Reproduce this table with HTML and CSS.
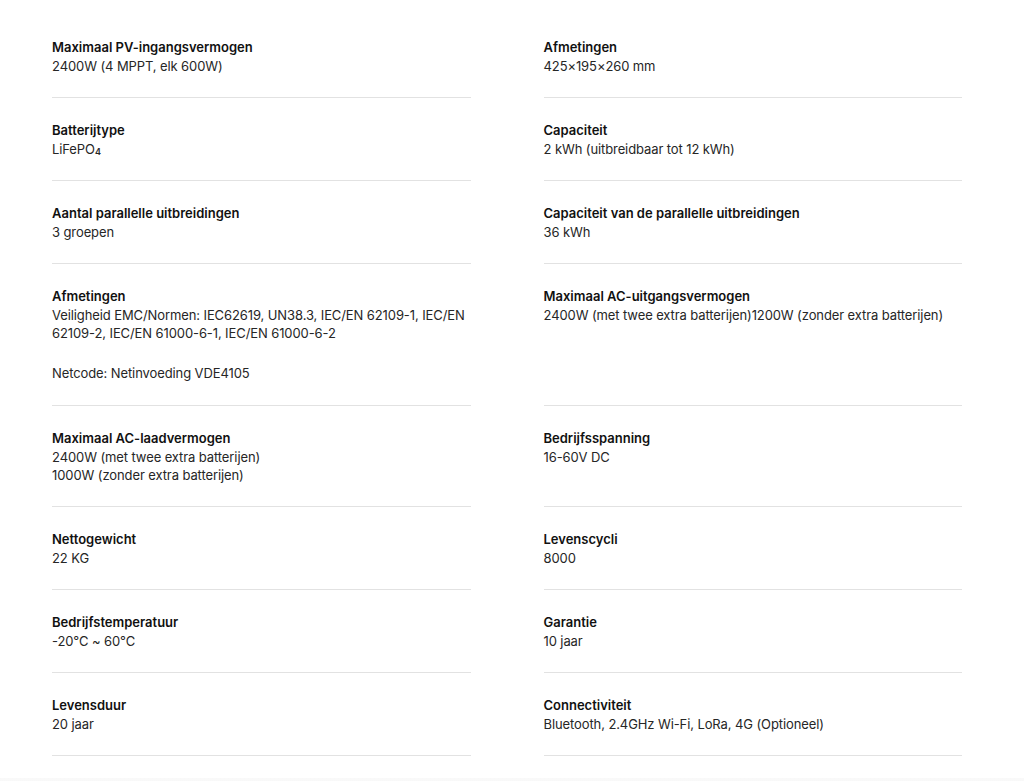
FILE: index.html
```
<!DOCTYPE html>
<html lang="nl">
<head>
<meta charset="utf-8">
<title>Specificaties</title>
<link rel="stylesheet" href="styles.css">
</head>
<body>
<main class="specs">
  <div class="spec"><div class="label">Maximaal PV-ingangsvermogen</div><div class="value">2400W (4 MPPT, elk 600W)</div></div>
  <div class="spec"><div class="label">Afmetingen</div><div class="value">425×195×260 mm</div></div>
  <div class="spec"><div class="label">Batterijtype</div><div class="value">LiFePO<sub>4</sub></div></div>
  <div class="spec"><div class="label">Capaciteit</div><div class="value">2 kWh (uitbreidbaar tot 12 kWh)</div></div>
  <div class="spec"><div class="label">Aantal parallelle uitbreidingen</div><div class="value">3 groepen</div></div>
  <div class="spec"><div class="label">Capaciteit van de parallelle uitbreidingen</div><div class="value">36 kWh</div></div>
  <div class="spec"><div class="label">Afmetingen</div><div class="value">Veiligheid EMC/Normen: IEC62619, UN38.3, IEC/EN 62109-1, IEC/EN 62109-2, IEC/EN 61000-6-1, IEC/EN 61000-6-2</div><div class="value para">Netcode: Netinvoeding VDE4105</div></div>
  <div class="spec"><div class="label">Maximaal AC-uitgangsvermogen</div><div class="value">2400W (met twee extra batterijen)1200W (zonder extra batterijen)</div></div>
  <div class="spec"><div class="label">Maximaal AC-laadvermogen</div><div class="value">2400W (met twee extra batterijen)<br>1000W (zonder extra batterijen)</div></div>
  <div class="spec"><div class="label">Bedrijfsspanning</div><div class="value">16-60V DC</div></div>
  <div class="spec"><div class="label">Nettogewicht</div><div class="value">22 KG</div></div>
  <div class="spec"><div class="label">Levenscycli</div><div class="value">8000</div></div>
  <div class="spec"><div class="label">Bedrijfstemperatuur</div><div class="value">-20°C ~ 60°C</div></div>
  <div class="spec"><div class="label">Garantie</div><div class="value">10 jaar</div></div>
  <div class="spec"><div class="label">Levensduur</div><div class="value">20 jaar</div></div>
  <div class="spec"><div class="label">Connectiviteit</div><div class="value">Bluetooth, 2.4GHz Wi-Fi, LoRa, 4G (Optioneel)</div></div>
</main>
<div class="footer-fade"></div>
</body>
</html>
```
FILE: styles.css
```
html, body {
  margin: 0;
  padding: 0;
  background: #ffffff;
}
body {
  font-family: Inter, "Noto Sans", "Liberation Sans", sans-serif;
  color: #1a1a1a;
  -webkit-font-smoothing: antialiased;
}
.specs {
  display: grid;
  grid-template-columns: 1fr 1fr;
  column-gap: 73px;
  width: 910px;
  padding: 15px 0 22px 52px;
}
.spec {
  padding: 22px 0;
  border-bottom: 1px solid #e2e2e2;
}
.label {
  font-size: 13px;
  line-height: 20px;
  font-weight: 600;
  color: #111111;
}
.value {
  font-size: 13px;
  line-height: 18px;
  font-weight: 400;
  letter-spacing: -0.1px;
  color: #262626;
}
.value.para {
  margin-top: 22px;
  margin-bottom: 1px;
}
.value sub {
  font-size: 9px;
  line-height: 0;
  vertical-align: -1px;
  font-weight: 600;
}
.footer-fade {
  height: 40px;
  background: linear-gradient(#f9f9f9, #f4f4f4);
}
```
